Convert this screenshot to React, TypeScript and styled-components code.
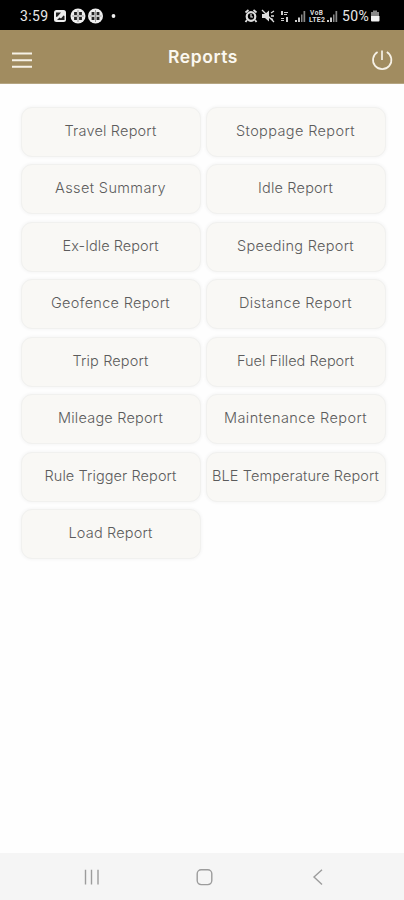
import React, { useLayoutEffect, useRef, useState } from "react";
import styled, { createGlobalStyle } from "styled-components";

const Global = createGlobalStyle`
  * { box-sizing: border-box; }
  body { margin: 0; background: #fefefe; font-family: Inter, "Open Sans", sans-serif; }
`;

const Screen = styled.div`
  width: 404px;
  height: 900px;
  display: flex;
  flex-direction: column;
  background: #fefefe;
  overflow: hidden;
`;

const StatusBar = styled.div`
  height: 30px;
  flex: none;
  background: #000;
  color: #e8e8e8;
  display: flex;
  align-items: center;
  justify-content: space-between;
  padding: 1px 23px 0 20px;
  font: 400 14px/16px Roboto, sans-serif;
`;

const StatusGroup = styled.div`
  display: flex;
  align-items: center;
`;

const StatusText = styled.span`
  display: flex;
  margin-top: 2px;
`;

const StatusIcons = styled.svg`
  display: block;
  fill: none;
  stroke: none;
`;

const Header = styled.header`
  height: 54px;
  flex: none;
  background: #a18c60;
  border-bottom: 1px solid #b5a582;
  display: grid;
  grid-template-columns: 24px 1fr 24px;
  align-items: center;
  padding: 0 10px;
`;

const HeaderIcon = styled.svg`
  display: block;
  margin-top: 6px;
  fill: none;
  stroke: #f6f1e6;
  stroke-width: 2;
`;

const Title = styled.h1`
  margin: 3px 0 0 2px;
  display: flex;
  justify-content: center;
  color: #fbf8f1;
  font-size: 17.5px;
  line-height: 24px;
  font-weight: 600;
`;

const Grid = styled.main`
  flex: 1;
  display: grid;
  grid-template-columns: 180px 180px;
  grid-auto-rows: 50px;
  column-gap: 5px;
  row-gap: 7.5px;
  padding: 22.5px 0 0 20.5px;
`;

const Card = styled.button`
  padding: 0;
  display: flex;
  align-items: center;
  justify-content: center;
  border: 1px solid #f1f1ef;
  border-radius: 11px;
  background: #f9f8f5;
  box-shadow: 0 0 3px 1px rgba(0, 0, 0, 0.035);
  color: #5c5c5c;
  font: 300 14.5px/20px Inter, "Open Sans", sans-serif;
`;

const Label = styled.span`
  display: block;
  flex: none;
  white-space: nowrap;
  margin-top: -2px;
`;

const NavBar = styled.nav`
  height: 47px;
  flex: none;
  background: #f5f5f5;
  display: grid;
  grid-template-columns: 20px 20px 20px;
  column-gap: 93px;
  align-items: center;
  padding-left: 82px;
`;

const NavIcon = styled.svg`
  display: block;
  fill: none;
  stroke: #9c9c9c;
  stroke-width: 1.4;
`;

const Spacer = styled.span`
  width: 5px;
`;

const reports: [string, number][] = [
  ["Travel Report", 91],
  ["Stoppage Report", 118],
  ["Asset Summary", 110],
  ["Idle Report", 74],
  ["Ex-Idle Report", 95],
  ["Speeding Report", 116],
  ["Geofence Report", 118],
  ["Distance Report", 112],
  ["Trip Report", 75],
  ["Fuel Filled Report", 116],
  ["Mileage Report", 104],
  ["Maintenance Report", 142],
  ["Rule Trigger Report", 131],
  ["BLE Temperature Report", 166],
  ["Load Report", 83],
];

/* Spreads a label's letters so that it takes the given width. */
function FittedLabel({ text, width }: { text: string; width: number }) {
  const ref = useRef<HTMLSpanElement>(null);
  const [spacing, setSpacing] = useState(0);
  useLayoutEffect(() => {
    if (ref.current) {
      setSpacing((width + 1 - ref.current.getBoundingClientRect().width) / text.length);
    }
  }, [text, width]);
  return (
    <Label ref={ref} style={{ letterSpacing: `${spacing}px` }}>
      {text}
    </Label>
  );
}

function NotificationIcons() {
  return (
    <StatusIcons width="64" height="16" viewBox="0 0 64 16">
      <rect x="0" y="2" width="12" height="12" rx="2.5" fill="#eee" />
      <path d="M2 4.5h5l-3.5 4L2 9zM3 12l2.5-2.5 1.5 1 2.5-3 1 .5v4z" fill="#222" />
      {[24, 41.5].map((cx) => (
        <g key={cx} transform={`translate(${cx} 8)`}>
          <circle r="7.5" fill="#eee" />
          <path d="M-3.9 -3.9h2.8v2.8h-2.8zM1.1 -3.9h2.8v2.8h-2.8zM-3.9 1.1h2.8v2.8h-2.8zM1.1 1.1h2.8v2.8h-2.8z" fill="#222" />
          <path d="M0 -6v12M-6 0h12" stroke="#777" strokeWidth=".7" />
        </g>
      ))}
      <circle cx="59.5" cy="8" r="1.9" fill="#eee" />
    </StatusIcons>
  );
}

function SignalIcons() {
  return (
    <StatusIcons width="98" height="16" viewBox="0 0 98 16">
      <circle cx="7" cy="8.5" r="4.3" stroke="#ddd" strokeWidth="2.2" />
      <path d="M7 6v3h2" stroke="#ddd" strokeWidth="1.2" />
      <path d="M1.5 4.5l3-2.5M9.5 2l3 2.5M3 12l-1.5 2M11 12l1.5 2" stroke="#ddd" strokeWidth="1.8" />
      <path d="M18 6h3l4-3.5v11L21 10h-3z" fill="#ddd" />
      <path d="M18 2l12 12M27 5l3-2M27 8h3M27 10.5l2 1" stroke="#ddd" strokeWidth="1.3" />
      <g fill="#ccc">
        <path d="M37 3h2v4h-2zM40 4h4v1h-4zM40 6h3v1h-3zM37 10h3v1h-3zM37 12h3v1h-3zM42 9h2v5h-2z" />
        <path d="M51 12h2v2h-2zM54 9.5h2V14h-2z" />
        <path d="M57 6.5h1.5V14H57zM59.5 3h1.7v11h-1.7z" fill="#888" />
        <path d="M83 12h2v2h-2zM86 9.5h2V14h-2z" />
        <path d="M89 6.5h1.5V14H89zM91.5 3h1.7v11h-1.7z" fill="#888" />
      </g>
      <g fill="#ddd" fontFamily="Roboto, sans-serif" fontWeight="700">
        <text x="66" y="7" fontSize="6.5" textLength="13">VoB</text>
        <text x="65" y="14" fontSize="7" textLength="16">LTE2</text>
      </g>
    </StatusIcons>
  );
}

export default function App() {
  return (
    <Screen>
      <Global />
      <StatusBar>
        <StatusGroup>
          <StatusText>
            <FittedLabel text="3:59" width={27.5} />
          </StatusText>
          <Spacer />
          <NotificationIcons />
        </StatusGroup>
        <StatusGroup>
          <SignalIcons />
          <StatusText>
            <FittedLabel text="50%" width={26} />
          </StatusText>
          <StatusIcons width="12" height="14" viewBox="0 0 12 14">
            <path d="M4 1.5h4V3h2v4H2V3h2z" fill="#888" />
            <path d="M2 7h8.5v4.5a1 1 0 0 1-1 1H3a1 1 0 0 1-1-1z" fill="#f2f2f2" />
          </StatusIcons>
        </StatusGroup>
      </StatusBar>
      <Header>
        <HeaderIcon width="24" height="24" viewBox="0 0 24 24">
          <path d="M2 5.5h20M2 12.3h20M2 18.7h20" />
        </HeaderIcon>
        <Title>
          <FittedLabel text="Reports" width={69} />
        </Title>
        <HeaderIcon width="24" height="24" viewBox="0 0 24 24">
          <path d="M12 2.5v9.5M7.6 4A9.2 9.2 0 1 0 16.8 4" strokeWidth="1.7" />
        </HeaderIcon>
      </Header>
      <Grid>
        {reports.map(([text, width]) => (
          <Card key={text}>
            <FittedLabel text={text} width={width} />
          </Card>
        ))}
      </Grid>
      <NavBar>
        <NavIcon width="20" height="20" viewBox="0 0 20 20">
          <path d="M3.5 2.8v14.8M9.5 2.8v14.8M16 2.8v14.8" />
        </NavIcon>
        <NavIcon width="20" height="20" viewBox="0 0 20 20">
          <rect x="2.2" y="2.8" width="14.6" height="14.8" rx="4" />
        </NavIcon>
        <NavIcon width="20" height="20" viewBox="0 0 20 20">
          <path d="M14 2.8l-8 7.2 8 7.4" />
        </NavIcon>
      </NavBar>
    </Screen>
  );
}
